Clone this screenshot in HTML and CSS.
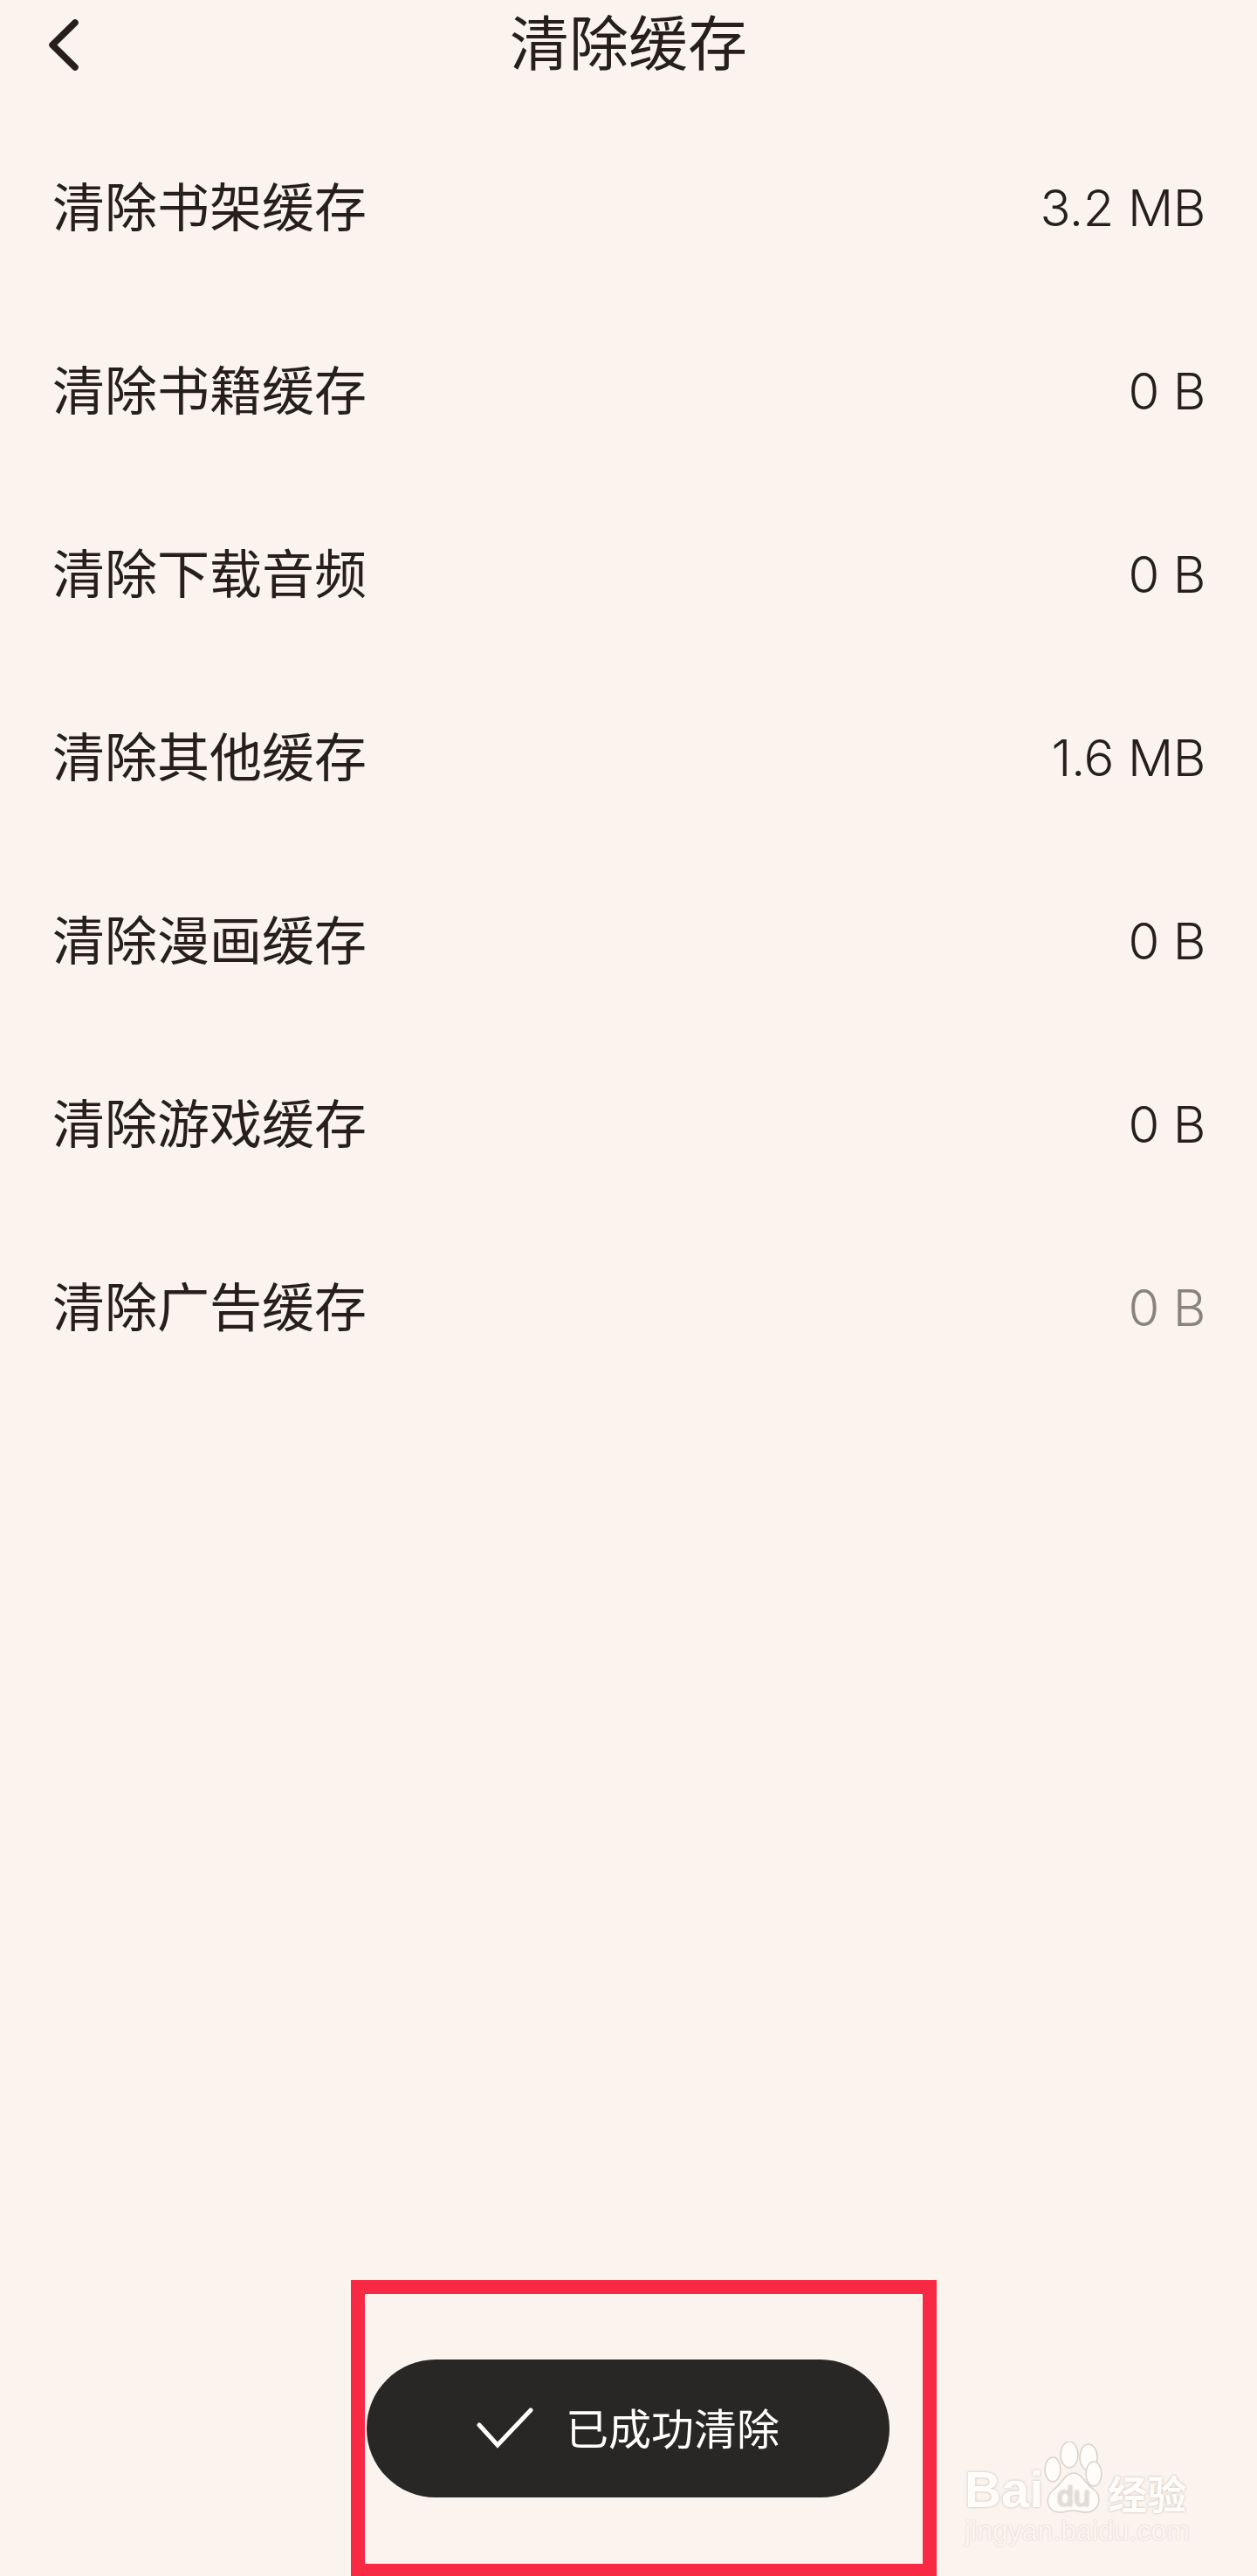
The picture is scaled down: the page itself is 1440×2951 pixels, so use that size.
FILE: index.html
```html
<!DOCTYPE html>
<html lang="zh-CN">
<head>
    <meta charset="UTF-8">
    <meta name="viewport" content="width=device-width, initial-scale=1.0">
    <title>清除缓存</title>
    <link rel="stylesheet" href="styles.css">
</head>
<body>
    <div class="page">
        <header class="topbar">
            <svg class="back-icon" width="44" height="70" viewBox="0 0 44 70">
                <path d="M36 9 L10 34.5 L36 60" fill="none" stroke="#26201c" stroke-width="7.5" stroke-linecap="round" stroke-linejoin="round"/>
            </svg>
            <h1 class="topbar-title">清除缓存</h1>
        </header>

        <ul class="cache-list">
            <li class="cache-row"><span class="cache-name">清除书架缓存</span><span class="cache-size">3.2 MB</span></li>
            <li class="cache-row"><span class="cache-name">清除书籍缓存</span><span class="cache-size">0 B</span></li>
            <li class="cache-row"><span class="cache-name">清除下载音频</span><span class="cache-size">0 B</span></li>
            <li class="cache-row"><span class="cache-name">清除其他缓存</span><span class="cache-size">1.6 MB</span></li>
            <li class="cache-row"><span class="cache-name">清除漫画缓存</span><span class="cache-size">0 B</span></li>
            <li class="cache-row"><span class="cache-name">清除游戏缓存</span><span class="cache-size">0 B</span></li>
            <li class="cache-row"><span class="cache-name">清除广告缓存</span><span class="cache-size muted">0 B</span></li>
        </ul>

        <!-- red box drawn over the screenshot -->
        <div class="highlight-box"></div>

        <div class="toast">
            <svg class="toast-icon" width="66" height="48" viewBox="0 0 66 48">
                <path d="M3 20 L24 43 L62 3" fill="none" stroke="#ffffff" stroke-width="5" stroke-linecap="round" stroke-linejoin="miter"/>
            </svg>
            <span class="toast-text">已成功清除</span>
        </div>

        <div class="watermark">
            <div class="wm-top">
                <span class="wm-bai">Bai</span>
                <svg class="wm-paw" width="68" height="84" viewBox="0 0 68 84">
                    <g fill="#fffcfa" stroke="#d9d1cb" stroke-width="1.5">
                        <ellipse cx="10" cy="32" rx="9" ry="14"/>
                        <ellipse cx="29" cy="15" rx="10" ry="15"/>
                        <ellipse cx="51" cy="18" rx="10" ry="15"/>
                        <ellipse cx="57" cy="37" rx="9" ry="14"/>
                        <path d="M34 36 C44 36 46 48 56 54 C68 62 64 81 48 81 C40 81 38 79 33 79 C27 79 25 81 18 81 C3 81 0 64 11 55 C21 48 24 36 34 36 Z"/>
                    </g>
                    <text class="wm-du" x="34" y="74" text-anchor="middle">du</text>
                </svg>
                <span class="wm-cn">经验</span>
            </div>
            <div class="wm-url">jingyan.baidu.com</div>
        </div>
    </div>
</body>
</html>
```

FILE: styles.css
```css
* {
    box-sizing: border-box;
}

html, body {
    margin: 0;
    padding: 0;
}

body {
    background-color: #fbf3ed;
    color: #26201c;
    font-family: "Noto Sans CJK SC", "Liberation Sans", sans-serif;
}

.page {
    position: relative;
    width: 1440px;
    height: 2951px;
    overflow: hidden;
}

.topbar {
    position: relative;
    height: 98px;
    padding-bottom: 6px;
    display: flex;
    align-items: center;
    justify-content: center;
}

.back-icon {
    position: absolute;
    left: 50px;
    top: 17px;
}

.topbar-title {
    margin: 0;
    font-size: 68px;
    font-weight: 400;
    line-height: 92px;
}

.cache-list {
    list-style: none;
    margin: 33px 0 0;
    padding: 0 59px 0 60px;
}

.cache-row {
    height: 210px;
    display: flex;
    align-items: center;
    justify-content: space-between;
}

.cache-name {
    padding-bottom: 5px;
    font-size: 60px;
    line-height: 80px;
}

.cache-size {
    padding-top: 4px;
    font-family: Inter, "Liberation Sans", sans-serif;
    font-size: 58px;
    font-weight: 300;
    line-height: 80px;
    letter-spacing: -0.4px;
}

.cache-size.muted {
    color: #8a827c;
}

.highlight-box {
    position: absolute;
    left: 402px;
    top: 2612px;
    width: 671px;
    height: 339px;
    border: 16px solid #f82a43;
    border-bottom-width: 14px;
}

.toast {
    position: absolute;
    left: 420px;
    top: 2703px;
    width: 599px;
    height: 158px;
    padding-left: 126px;
    display: flex;
    align-items: center;
    gap: 36px;
    background-color: #282725;
    border-radius: 79px;
}

.toast-text {
    padding-bottom: 5px;
    color: #ffffff;
    font-size: 49px;
    line-height: 60px;
}

.watermark {
    position: absolute;
    left: 1105px;
    top: 2797px;
    width: 260px;
    color: #fffcfa;
    text-shadow: 0 0 3px #bfb6b0;
}

.wm-top {
    display: flex;
    align-items: flex-end;
    height: 84px;
}

.wm-bai {
    font-family: "Liberation Sans", sans-serif;
    font-size: 58px;
    font-weight: 700;
    line-height: 58px;
}

.wm-paw {
    margin-left: 1px;
    flex-shrink: 0;
}

.wm-du {
    font-family: "Liberation Sans", sans-serif;
    font-size: 34px;
    fill: #e3dcd6;
}

.wm-cn {
    margin-left: 5px;
    margin-bottom: 3px;
    font-size: 45px;
    font-weight: 700;
    line-height: 44px;
}

.wm-url {
    font-family: "Liberation Sans", sans-serif;
    font-size: 32px;
    line-height: 36px;
    color: #fbf6f2;
    text-shadow: 0 0 2px #cfc7c1;
}
```
